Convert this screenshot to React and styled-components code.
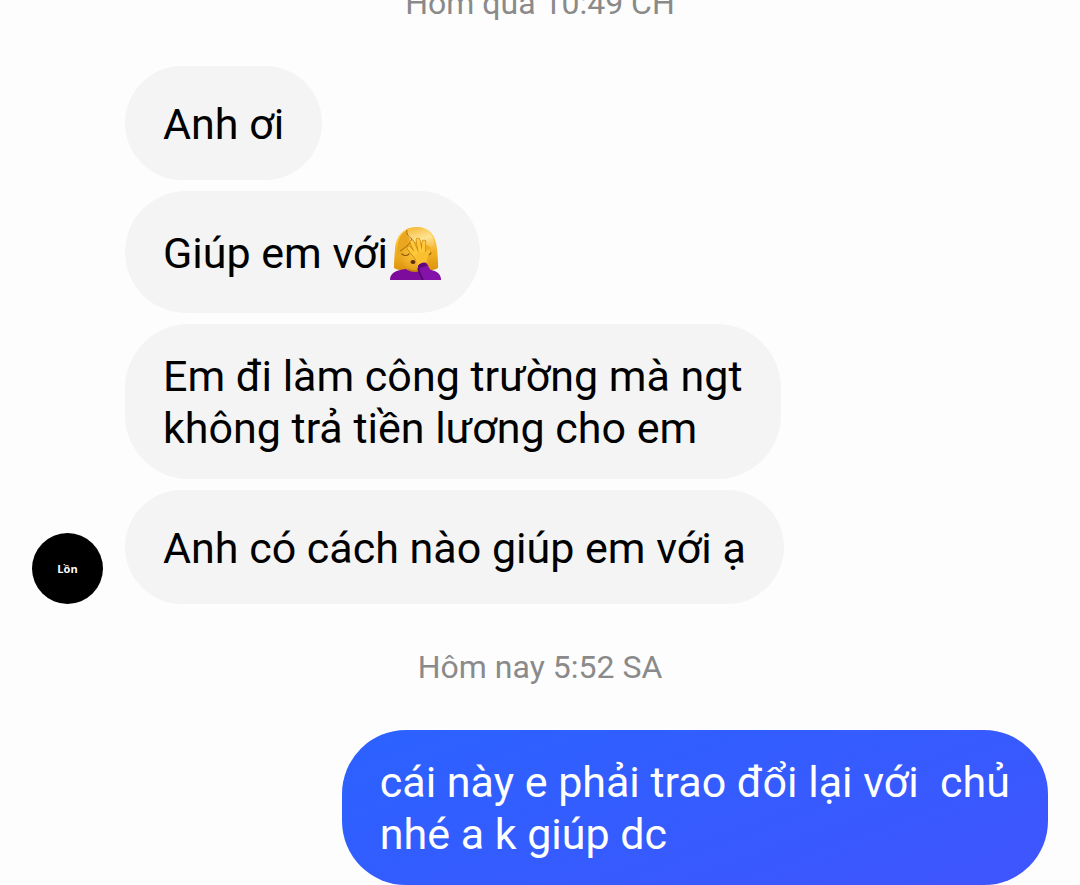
import React from "react";
import styled, { createGlobalStyle } from "styled-components";

const GlobalStyle = createGlobalStyle`
	* {
		box-sizing: border-box;
	}

	body {
		margin: 0;
		background-color: #fdfdfd;
		font-family: Roboto, "Noto Sans", sans-serif;
	}
`;

// The thread sticks to its newest message, older ones run off the top
const Thread = styled.main`
	display: flex;
	flex-direction: column;
	justify-content: flex-end;
	height: 100vh;
	padding: 0 32px;
	overflow: hidden;
`;

const Timestamp = styled.time`
	flex-shrink: 0;
	padding: 43px 0;
	color: #8a8a8a;
	font-size: 32px;
	line-height: 40px;
	text-align: center;
`;

const MessageGroup = styled.section`
	display: flex;
	flex-shrink: 0;
	align-items: flex-end;
	justify-content: ${({ $mine }) => ($mine ? "flex-end" : "flex-start")};
	gap: 22px;
`;

const Avatar = styled.div`
	display: flex;
	flex-shrink: 0;
	align-items: center;
	justify-content: center;
	width: 71px;
	height: 71px;
	border-radius: 50%;
	background-color: #000;
	color: #fff;
	font-family: "Open Sans", sans-serif;
	font-size: 11px;
	font-weight: 700;
	line-height: 12px;
`;

const BubbleList = styled.div`
	display: flex;
	flex-direction: column;
	align-items: flex-start;
	gap: 11px;
`;

const Bubble = styled.p`
	display: flex;
	align-items: center;
	min-height: ${({ $emoji }) => ($emoji ? "122px" : "114px")};
	margin: 0;
	padding: 26px 38px 25px;
	border-radius: 64px;
	background: ${({ $mine }) =>
		$mine ? "linear-gradient(160deg, #2b62ff, #3f55fd)" : "#f4f4f4"};
	color: ${({ $mine }) => ($mine ? "#fff" : "#000")};
	font-size: 43px;
	line-height: 52px;
	white-space: pre-wrap;
`;

const EmojiIcon = styled.svg`
	flex-shrink: 0;
	width: 52px;
	height: 54px;
	margin-left: 2px;
`;

function FacepalmEmoji() {
	return (
		<EmojiIcon viewBox="0 0 52 54" role="img" aria-label="facepalm">
			<defs>
				<linearGradient id="hair" x1="0" y1="0" x2="0" y2="1">
					<stop offset="0" stopColor="#ffd65a" />
					<stop offset="0.5" stopColor="#f7b828" />
					<stop offset="1" stopColor="#dc930d" />
				</linearGradient>
				<radialGradient id="face" cx="0.5" cy="0.4" r="0.6">
					<stop offset="0" stopColor="#ffcb3a" />
					<stop offset="1" stopColor="#e5a01c" />
				</radialGradient>
				<linearGradient id="fringe" x1="0" y1="0" x2="0.3" y2="1">
					<stop offset="0" stopColor="#f3b32c" />
					<stop offset="0.5" stopColor="#ffe493" />
					<stop offset="1" stopColor="#f2ac22" />
				</linearGradient>
			</defs>
			<path
				d="M27 1C13 1 6 10 5 23c-.6 8-1 13-1 19 3 2 9 3 14 2h17c5 1 10 0 13-2 .2-6-.2-12-1-19C46 9 39 1 27 1z"
				fill="url(#hair)"
			/>
			<path d="M18 38h15v9c-4 4-11 4-15 0z" fill="#c9820f" />
			<path
				d="M10 24c1-5 5-7 14-9 9 0 16 4 17 10 1 9-5 19-16 19S9 33 10 24z"
				fill="url(#face)"
			/>
			<path
				d="M17 3c-3 4-3 8 1 10 6 4 15 3 23 8 2 4 2 7 3 11C48 15 41 1 27 1c-4 0-8 1-10 2z"
				fill="url(#fringe)"
			/>
			<path d="M17 4C9 8 7 17 7 30c5-4 10-10 13-17-3-3-4-6-3-9z" fill="#eba61f" />
			<path
				d="M17 4c-1 4 2 7 5 9-3 6-7 9-12 12"
				fill="none"
				stroke="#a56a0c"
				strokeWidth="1"
			/>
			<path
				d="M12 28c2 2 5 2 7 0M36 28c2 1 4 1 5-1"
				fill="none"
				stroke="#8f5908"
				strokeWidth="1.200"
				strokeLinecap="round"
			/>
			<ellipse cx="23" cy="36" rx="2.500" ry="2" fill="#5d2f08" />
			<g fill="none" strokeLinecap="round">
				<path
					d="M19 22l8 10M22 16l6 14M28 14l3 16M34 16l-1 14"
					stroke="#c28112"
					strokeWidth="4.600"
				/>
				<path
					d="M19 22l8 10M22 16l6 14M28 14l3 16M34 16l-1 14"
					stroke="#ffc93a"
					strokeWidth="3.400"
				/>
			</g>
			<path
				d="M25 29c4-3 8-4 11-3 1-2 3-3 4-2 1 2-2 5-3 9l-1 7-8 1c-1-4-2-7-3-12z"
				fill="#fbc02f"
			/>
			<path
				d="M0 54c0-7 6-10 16-11 5 4 13 4 18 0 12 1 17 4 17 11z"
				fill="#7d0c9c"
			/>
			<path
				d="M28 41c0-3 5-5 8-4 3 2 2 5 5 7 4 2 8 4 10 10H33c-2-5-4-9-5-13z"
				fill="#8512a8"
			/>
			<path d="M28 41c0-3 5-5 8-4l1 3c-3 0-6 1-8 3z" fill="#5c087a" />
			<path d="M28 42c1 4 3 8 5 12" fill="none" stroke="#4e0768" strokeWidth="1.500" />
		</EmojiIcon>
	);
}

const receivedMessages = [
	{ id: 1, text: "Anh ơi" },
	{ id: 2, text: "Giúp em với", emoji: true },
	{ id: 3, text: "Em đi làm công trường mà ngt\nkhông trả tiền lương cho em" },
	{ id: 4, text: "Anh có cách nào giúp em với ạ" },
];

function App() {
	return (
		<>
			<GlobalStyle />
			<Thread>
				<Timestamp>Hôm qua 10:49 CH</Timestamp>
				<MessageGroup>
					<Avatar>Lồn</Avatar>
					<BubbleList>
						{receivedMessages.map((message) => (
							<Bubble key={message.id} $emoji={message.emoji}>
								{message.text}
								{message.emoji && <FacepalmEmoji />}
							</Bubble>
						))}
					</BubbleList>
				</MessageGroup>
				<Timestamp>Hôm nay 5:52 SA</Timestamp>
				<MessageGroup $mine>
					<Bubble $mine>
						{"cái này e phải trao đổi lại với  chủ\nnhé a k giúp dc"}
					</Bubble>
				</MessageGroup>
			</Thread>
		</>
	);
}

export default App;
